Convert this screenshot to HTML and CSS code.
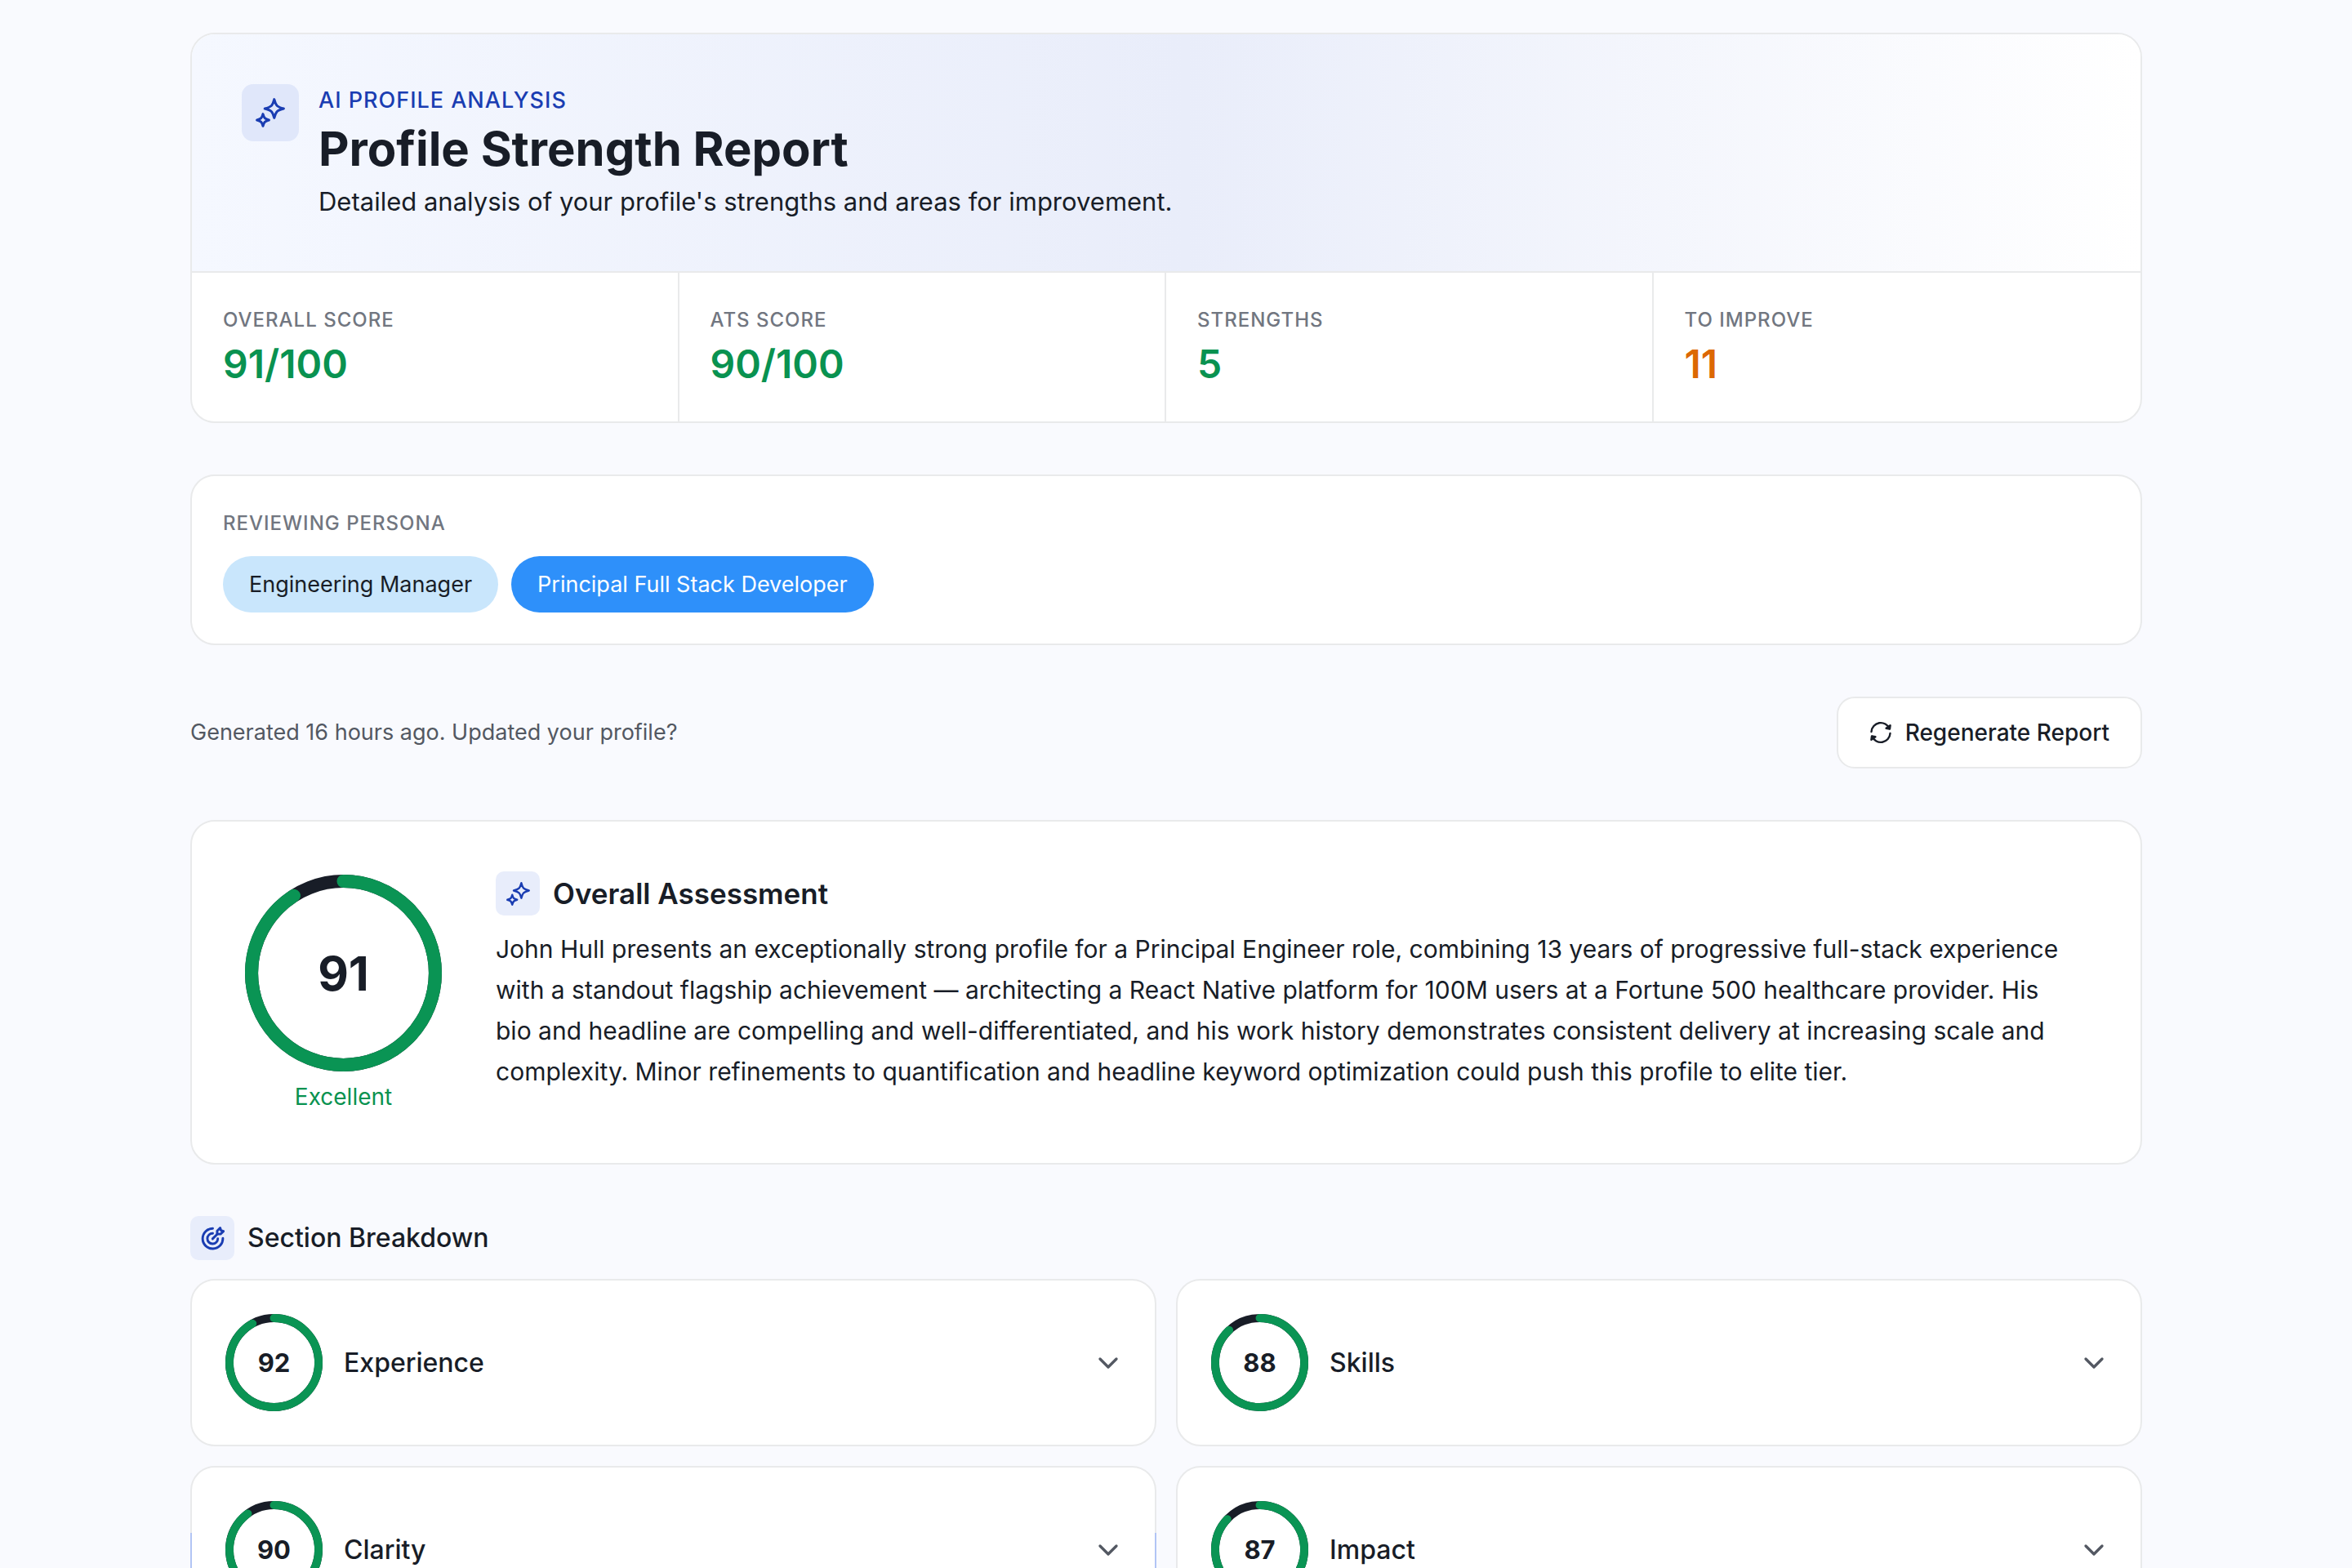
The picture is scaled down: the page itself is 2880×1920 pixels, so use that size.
FILE: index.html
```
<!DOCTYPE html>
<html lang="en">
<head>
  <meta charset="UTF-8">
  <meta name="viewport" content="width=device-width, initial-scale=1">
  <title>Profile Strength Report</title>
  <link rel="stylesheet" href="styles.css">
</head>
<body>

<svg class="icon-defs" aria-hidden="true">
  <symbol id="icon-sparkles" viewBox="0 0 36 36">
    <path d="M22.8 1.6C24 6.4 24.9 8 26.3 9.5C27.8 10.9 29.6 11.8 34.4 13C29.6 14.2 27.8 15.1 26.3 16.5C24.9 18 24 19.6 22.8 24.4C21.6 19.6 20.7 18 19.3 16.5C17.8 15.1 16 14.2 11.2 13C16 11.8 17.8 10.9 19.3 9.5C20.7 8 21.6 6.4 22.8 1.6Z"/>
    <path d="M9 19.6C9.8 22.6 10.3 23.6 11.3 24.7C12.4 25.7 13.4 26.2 16.4 27C13.4 27.8 12.4 28.3 11.3 29.3C10.3 30.4 9.8 31.4 9 34.4C8.2 31.4 7.7 30.4 6.7 29.3C5.6 28.3 4.6 27.8 1.6 27C4.6 26.2 5.6 25.7 6.7 24.7C7.7 23.6 8.2 22.6 9 19.6Z"/>
  </symbol>
  <symbol id="icon-target" viewBox="0 0 30 30">
    <path d="M15 2.4A12.8 12.8 0 1 0 27.8 14.6"/>
    <path d="M15 8.6A6.6 6.6 0 1 0 21.4 15.2"/>
    <path d="M14.8 15.4L21.2 9"/>
    <path d="M20.6 9.4V5.4L24.4 1.6L25.4 4.8L28.6 5.8L24.8 9.4Z"/>
  </symbol>
  <symbol id="icon-refresh" viewBox="0 0 28 28">
    <path d="M2.5 13A11.5 11.5 0 0 1 24.6 9.2"/>
    <path d="M25.5 15A11.5 11.5 0 0 1 3.4 18.8"/>
    <path class="tip" d="M25.6 5.2L25 9.6L20.6 8.8Z"/>
    <path class="tip" d="M2.4 22.8L3 18.4L7.4 19.2Z"/>
  </symbol>
  <symbol id="icon-chevron" viewBox="0 0 24 24">
    <path d="M6 9L12 15L18 9"/>
  </symbol>
</svg>

<main class="report">

  <section class="card summary">
    <header class="hero">
      <span class="icon-tile icon-tile-lg"><svg><use href="#icon-sparkles"/></svg></span>
      <div class="hero-text">
        <p class="eyebrow">AI PROFILE ANALYSIS</p>
        <h1>Profile Strength Report</h1>
        <p class="hero-desc">Detailed analysis of your profile's strengths and areas for improvement.</p>
      </div>
    </header>
    <div class="stats">
      <div class="stat">
        <div class="label">OVERALL SCORE</div>
        <div class="stat-value">91/100</div>
      </div>
      <div class="stat">
        <div class="label">ATS SCORE</div>
        <div class="stat-value">90/100</div>
      </div>
      <div class="stat">
        <div class="label">STRENGTHS</div>
        <div class="stat-value">5</div>
      </div>
      <div class="stat">
        <div class="label">TO IMPROVE</div>
        <div class="stat-value warning">11</div>
      </div>
    </div>
  </section>

  <section class="card persona">
    <div class="label">REVIEWING PERSONA</div>
    <div class="chips">
      <span class="chip">Engineering Manager</span>
      <span class="chip chip-primary">Principal Full Stack Developer</span>
    </div>
  </section>

  <div class="generated">
    <p>Generated 16 hours ago. Updated your profile?</p>
    <button type="button" class="regenerate">
      <svg><use href="#icon-refresh"/></svg>
      Regenerate Report
    </button>
  </div>

  <section class="card assessment">
    <div class="overall">
      <div class="ring ring-lg">
        <svg viewBox="0 0 120 120">
          <circle class="track" cx="60" cy="60" r="56"/>
          <circle class="progress" cx="60" cy="60" r="56" pathLength="100" stroke-dasharray="91 100"/>
        </svg>
        <span>91</span>
      </div>
      <p class="rating">Excellent</p>
    </div>
    <div class="assessment-body">
      <div class="heading">
        <span class="icon-tile"><svg><use href="#icon-sparkles"/></svg></span>
        <h2>Overall Assessment</h2>
      </div>
      <p>John Hull presents an exceptionally strong profile for a Principal Engineer role, combining 13 years of progressive full-stack experience with a standout flagship achievement — architecting a React Native platform for 100M users at a Fortune 500 healthcare provider. His bio and headline are compelling and well-differentiated, and his work history demonstrates consistent delivery at increasing scale and complexity. Minor refinements to quantification and headline keyword optimization could push this profile to elite tier.</p>
    </div>
  </section>

  <section class="breakdown">
    <div class="heading">
      <span class="icon-tile"><svg><use href="#icon-target"/></svg></span>
      <h3>Section Breakdown</h3>
    </div>
    <div class="section-grid">
      <button type="button" class="card section-card">
        <span class="ring">
          <svg viewBox="0 0 120 120">
            <circle class="track" cx="60" cy="60" r="55"/>
            <circle class="progress" cx="60" cy="60" r="55" pathLength="100" stroke-dasharray="92 100"/>
          </svg>
          <span>92</span>
        </span>
        <span class="section-name">Experience</span>
        <svg class="chevron"><use href="#icon-chevron"/></svg>
      </button>
      <button type="button" class="card section-card">
        <span class="ring">
          <svg viewBox="0 0 120 120">
            <circle class="track" cx="60" cy="60" r="55"/>
            <circle class="progress" cx="60" cy="60" r="55" pathLength="100" stroke-dasharray="88 100"/>
          </svg>
          <span>88</span>
        </span>
        <span class="section-name">Skills</span>
        <svg class="chevron"><use href="#icon-chevron"/></svg>
      </button>
      <button type="button" class="card section-card highlighted">
        <span class="ring">
          <svg viewBox="0 0 120 120">
            <circle class="track" cx="60" cy="60" r="55"/>
            <circle class="progress" cx="60" cy="60" r="55" pathLength="100" stroke-dasharray="90 100"/>
          </svg>
          <span>90</span>
        </span>
        <span class="section-name">Clarity</span>
        <svg class="chevron"><use href="#icon-chevron"/></svg>
      </button>
      <button type="button" class="card section-card">
        <span class="ring">
          <svg viewBox="0 0 120 120">
            <circle class="track" cx="60" cy="60" r="55"/>
            <circle class="progress" cx="60" cy="60" r="55" pathLength="100" stroke-dasharray="87 100"/>
          </svg>
          <span>87</span>
        </span>
        <span class="section-name">Impact</span>
        <svg class="chevron"><use href="#icon-chevron"/></svg>
      </button>
    </div>
  </section>

</main>

</body>
</html>
```
FILE: styles.css
```
* {
  box-sizing: border-box;
}

html {
  height: 100%;
  overflow: hidden;
}

body {
  margin: 0;
  height: 100%;
  overflow: hidden;
  padding: 40px 24px 0 0;
  background: #f9fafe;
  color: #181d27;
  font-family: Inter, "Open Sans", sans-serif;
  font-size: 27px;
  line-height: 40px;
}

h1, h2, h3, p {
  margin: 0;
}

button {
  font: inherit;
  color: inherit;
  cursor: pointer;
}

.icon-defs {
  position: absolute;
  width: 0;
  height: 0;
}

.report {
  max-width: 2390px;
  margin: 0 auto;
  display: flex;
  flex-direction: column;
  gap: 63px;
}

.card {
  background: #fff;
  border: 2px solid #e9eaeb;
  border-radius: 30px;
}

/* icon tiles */
.icon-tile {
  display: flex;
  align-items: center;
  justify-content: center;
  flex-shrink: 0;
  width: 54px;
  height: 54px;
  border-radius: 10px;
  background: #e8edfb;
}

.icon-tile svg {
  width: 29px;
  height: 29px;
  fill: none;
  stroke: #1a3db2;
  stroke-width: 3;
  stroke-linecap: round;
  stroke-linejoin: round;
}

.icon-tile-lg {
  width: 70px;
  height: 70px;
  border-radius: 14px;
  background: #e0e7fa;
}

.icon-tile-lg svg {
  width: 36px;
  height: 36px;
}

/* summary */
.summary {
  overflow: hidden;
}

.hero {
  display: flex;
  gap: 24px;
  padding: 61px 61px 59px;
  border-bottom: 2px solid #e9eaeb;
  background: linear-gradient(to right, #f5f8ff, #e9edfa 51%, #fff);
}

.eyebrow {
  color: #1a3db2;
  font-weight: 500;
  letter-spacing: 1px;
}

h1 {
  font-size: 58px;
  line-height: 78px;
  font-weight: 700;
}

.hero-desc {
  font-size: 31px;
  line-height: 52px;
}

.stats {
  display: grid;
  grid-template-columns: repeat(4, 1fr);
}

.stat {
  padding: 38px 38px 36px;
  border-right: 2px solid #e9eaeb;
}

.stat:last-child {
  border-right: none;
}

.label {
  color: #717680;
  font-size: 24px;
  font-weight: 500;
  letter-spacing: 1px;
}

.stat-value {
  color: #099250;
  font-size: 48px;
  line-height: 68px;
  font-weight: 600;
}

.stat-value.warning {
  color: #dc6803;
}

/* persona */
.persona {
  padding: 38px;
}

.chips {
  display: flex;
  gap: 16px;
  margin-top: 20px;
}

.chip {
  padding: 15px 32px 14px;
  border-radius: 35px;
  background: #c9e6fc;
}

.chip-primary {
  background: #2e90fa;
  color: #fff;
}

/* generated row */
.generated {
  display: flex;
  align-items: center;
  justify-content: space-between;
  color: #535862;
}

.regenerate {
  display: flex;
  align-items: center;
  gap: 16px;
  padding: 22px 38px;
  border: 2px solid #e9eaeb;
  border-radius: 22px;
  background: #fff;
  color: #181d27;
  font-size: 28px;
  font-weight: 500;
}

.regenerate svg {
  width: 28px;
  height: 28px;
  fill: none;
  stroke: currentColor;
  stroke-width: 2.4;
  stroke-linecap: round;
  stroke-linejoin: round;
}

.tip {
  fill: currentColor;
}

/* score rings */
.ring {
  display: grid;
  place-items: center;
  flex-shrink: 0;
  font-size: 31px;
  font-weight: 700;
}

.ring > * {
  grid-area: 1 / 1;
}

.ring svg {
  width: 119px;
  height: 119px;
  fill: none;
  stroke-width: 10;
  transform: rotate(-90deg);
}

.ring-lg {
  font-size: 58px;
}

.ring-lg svg {
  width: 241px;
  height: 241px;
  stroke-width: 8;
}

.track {
  stroke: #181d27;
}

.progress {
  stroke: #0a9454;
  stroke-linecap: round;
}

/* assessment */
.assessment {
  display: flex;
  gap: 66px;
  padding: 61px 86px 61px 65px;
}

.overall {
  padding-top: 4px;
  text-align: center;
}

.rating {
  margin-top: 11px;
  color: #099250;
  font-size: 28px;
}

.assessment-body p {
  margin-top: 16px;
  font-size: 30px;
  line-height: 50px;
}

.heading {
  display: flex;
  align-items: center;
  gap: 16px;
}

h2 {
  font-size: 35px;
  font-weight: 600;
}

h3 {
  font-size: 32px;
  font-weight: 500;
}

/* breakdown */
.section-grid {
  display: grid;
  grid-template-columns: 1fr 1fr;
  gap: 24px;
  margin-top: 23px;
}

.section-card {
  position: relative;
  display: flex;
  align-items: center;
  gap: 26px;
  padding: 41px;
  text-align: left;
}

.section-name {
  flex: 1;
  font-size: 32px;
  font-weight: 500;
}

.chevron {
  width: 40px;
  height: 40px;
  margin-right: -4px;
  fill: none;
  stroke: #535862;
  stroke-width: 2;
  stroke-linecap: round;
  stroke-linejoin: round;
}

/* side accents on the lower part of the card */
.highlighted::after {
  content: "";
  position: absolute;
  top: 80px;
  right: -2px;
  bottom: 30px;
  left: -2px;
  border: solid #b2c5f5;
  border-width: 0 2px;
  pointer-events: none;
}
```
